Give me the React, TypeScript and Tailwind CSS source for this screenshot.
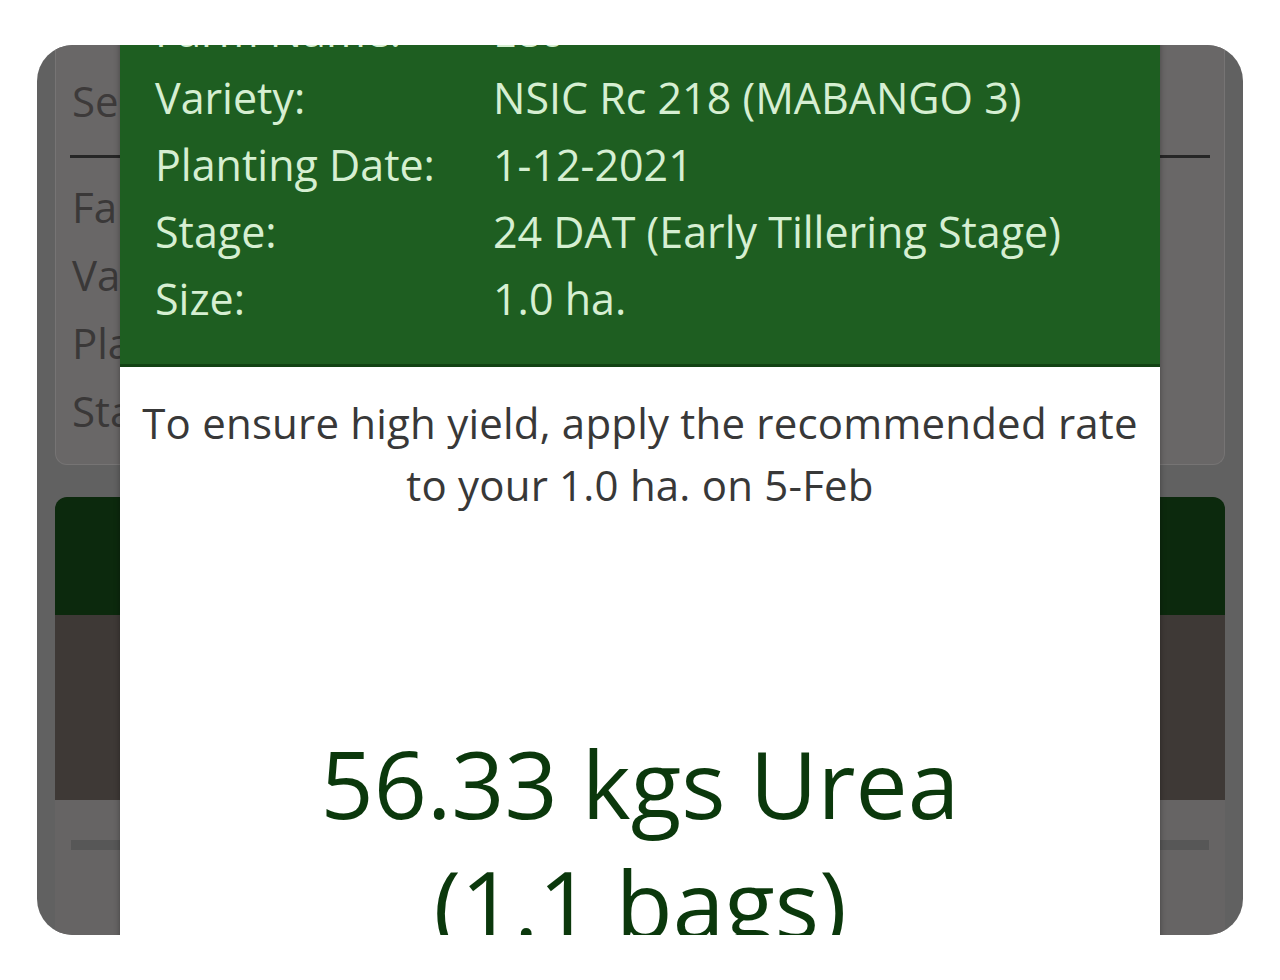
import React from "react";

const rows = [
  ["Farm Name:", "Leo"],
  ["Variety:", "NSIC Rc 218 (MABANGO 3)"],
  ["Planting Date:", "1-12-2021"],
  ["Stage:", "24 DAT (Early Tillering Stage)"],
  ["Size:", "1.0 ha."],
];

export default function App() {
  const font = { fontFamily: "'Open Sans', 'Noto Sans', sans-serif" };
  return (
    <div className="w-[1280px] h-[980px] bg-white pt-[45px] pl-[37px]" style={font}>
      <div className="relative w-[1206px] h-[890px] rounded-[36px] overflow-hidden bg-[#616161]">
        {/* dimmed background app */}
        <div className="flex flex-col px-[18px]">
          <div className="h-[420px] rounded-b-[12px] bg-[#696767] border border-[#767474] border-t-0 flex flex-col px-[16px]">
            <div className="h-[110px] flex items-center text-[42px] text-[#3d3a3a]">Select Farm</div>
            <div className="h-[3px] bg-[#262626] mx-[-2px]" />
            <div className="flex flex-col pt-[14px] text-[42px] text-[#3a3838]">
              <div className="h-[68px] flex items-center">Farm Name:</div>
              <div className="h-[68px] flex items-center">Variety:</div>
              <div className="h-[68px] flex items-center">Planting Date:</div>
              <div className="h-[68px] flex items-center">Stage:</div>
            </div>
          </div>
          <div className="mt-[32px] h-[118px] rounded-t-[12px] bg-[#0c290d]" />
          <div className="h-[185px] bg-[#3e3936]" />
          <div className="h-[135px] bg-[#666464] pt-[40px] px-[16px]">
            <div className="h-[10px] bg-[#575757]" />
          </div>
        </div>

        {/* modal */}
        <div className="absolute left-[83px] top-[-60px] w-[1040px] flex flex-col shadow-[0_0_6px_rgba(0,0,0,0.35)]">
          <div className="bg-[#1e5e21] pt-[12px] pb-[32px] border-b-[3px] border-[#124214] pl-[35px] text-[#d6efd2] text-[43px]">
            {rows.map(([k, v]) => (
              <div key={k} className="h-[67px] flex items-center leading-[67px]">
                <span className="w-[338px]">{k}</span>
                <span>{v}</span>
              </div>
            ))}
          </div>
          <div className="bg-white h-[600px] flex flex-col items-center pt-[25px]">
            <div className="text-[42px] leading-[62px] text-[#383838] text-center whitespace-nowrap tracking-[0.2px]">
              To ensure high yield, apply the recommended rate
              <br />
              to your 1.0 ha. on 5-Feb
            </div>
            <div className="mt-[207px] text-[93px] leading-[120px] text-[#0b380c] text-center whitespace-nowrap">
              56.33 kgs Urea
              <br />
              (1.1 bags)
            </div>
          </div>
        </div>
      </div>
    </div>
  );
}
